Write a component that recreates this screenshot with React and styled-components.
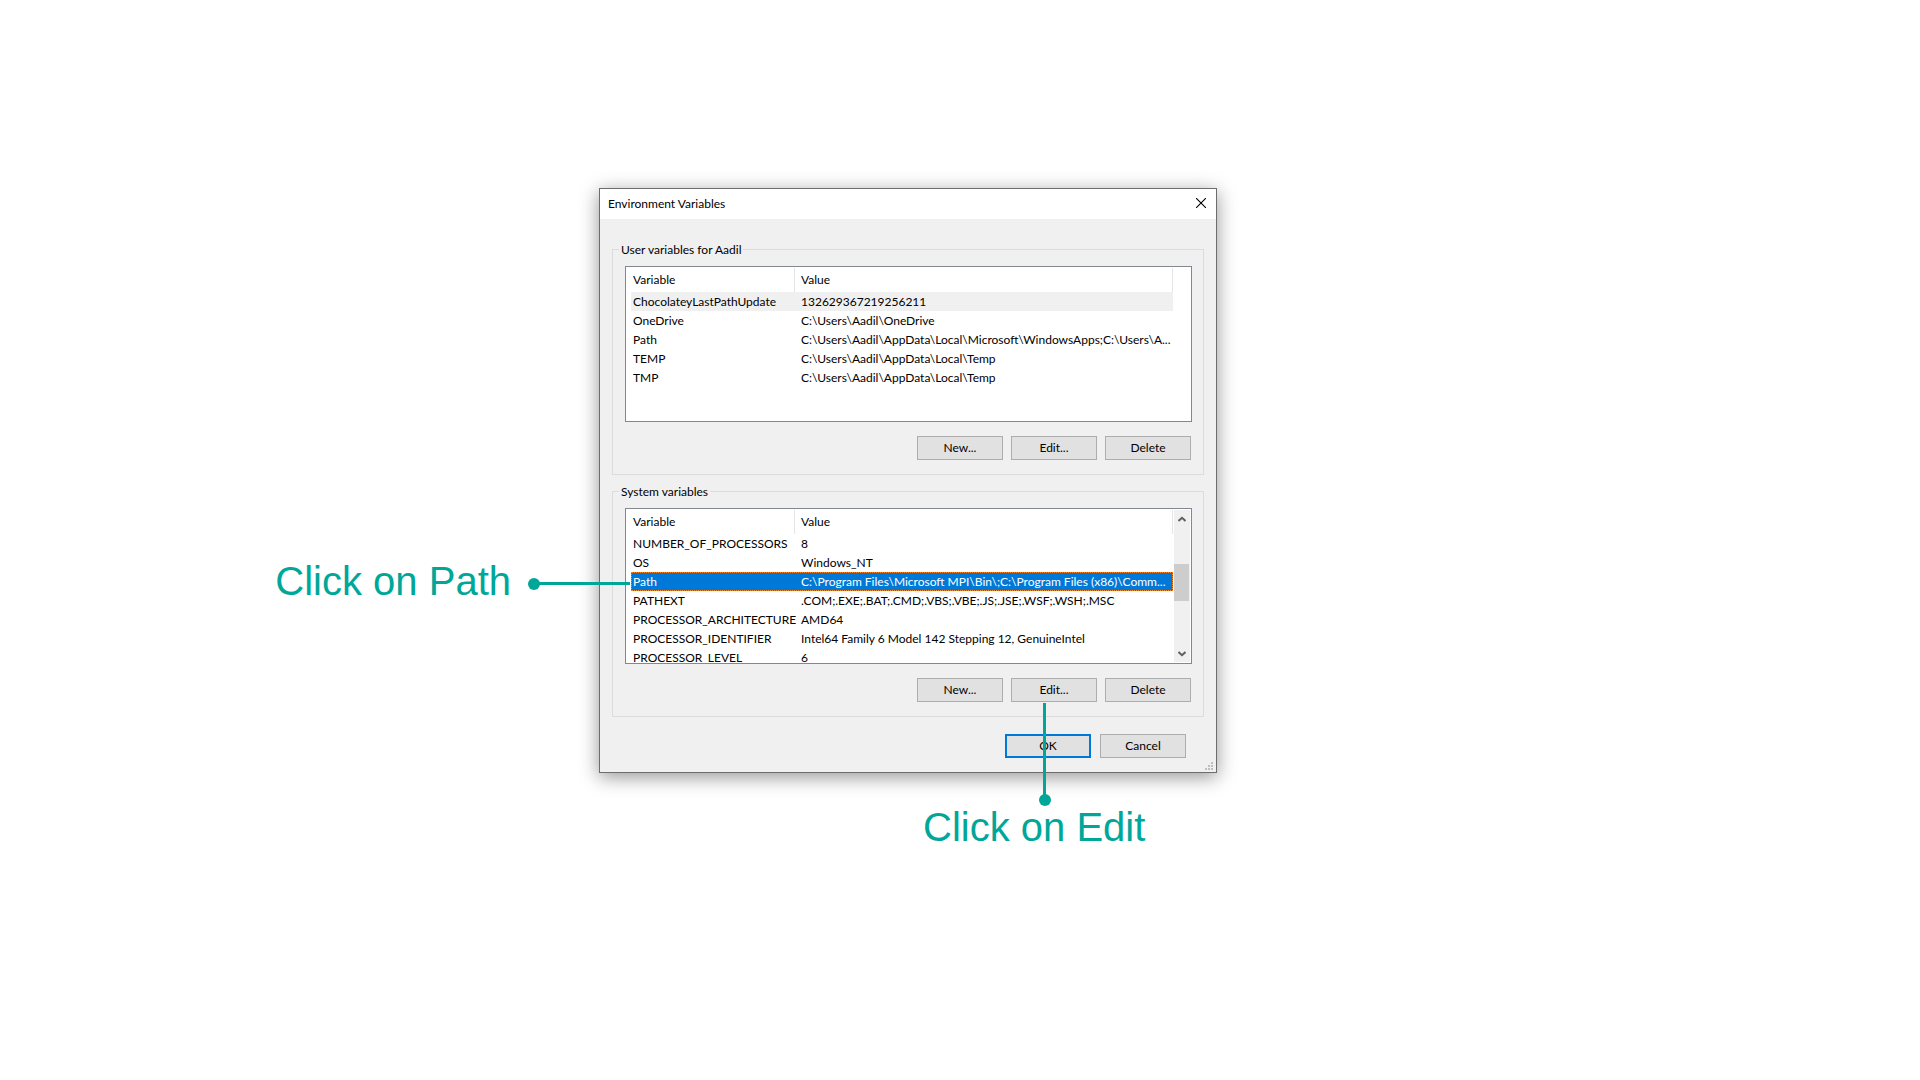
import React from "react";
import styled, { createGlobalStyle, css } from "styled-components";

const GlobalStyle = createGlobalStyle`
  *, *::before, *::after { box-sizing: border-box; }
  body {
    margin: 0;
    background: #ffffff;
    color: #000000;
    font: 12px/19px "Segoe UI", Lato, sans-serif;
  }
`;

const Page = styled.main`
  display: grid;
  grid-template-columns: 599fr 618px 703fr;
  grid-template-rows: 188fr auto 307fr;
  min-height: 100vh;
`;

const Dialog = styled.section`
  grid-area: 2 / 2;
  position: relative;
  background: #f0f0f0;
  border: 1px solid #6d6d6d;
  box-shadow: 0 4px 18px rgba(0, 0, 0, 0.42);
`;

const TitleBar = styled.header`
  display: flex;
  align-items: center;
  justify-content: space-between;
  height: 30px;
  padding: 0 0 2px 8px;
  background: #ffffff;
`;

const Title = styled.h1`
  margin: 0;
  font-size: inherit;
  font-weight: 400;
`;

const CloseButton = styled.button`
  display: grid;
  place-items: center;
  width: 30px;
  height: 28px;
  padding: 0;
  border: 0;
  background: transparent;
`;

const Body = styled.div`
  display: flex;
  flex-direction: column;
  gap: 8px;
  padding: 22px 12px 14px;
`;

const Group = styled.fieldset`
  min-width: 0;
  margin: 0;
  padding: 8px 11px 14px 12px;
  border: 1px solid #dcdcdc;
`;

const Legend = styled.legend`
  margin-left: -6px;
  padding: 0 2px;
  line-height: 17px;
`;

const ListBox = styled.div`
  display: flex;
  justify-content: space-between;
  height: 156px;
  padding: 1px 1px 1px 5px;
  overflow: hidden;
  background: #ffffff;
  border: 1px solid #828790;
`;

const TableClip = styled.div`
  width: 542px;
  overflow: hidden;
`;

const Table = styled.table`
  width: 100%;
  table-layout: fixed;
  border-collapse: separate;
  border-spacing: 0;
`;

const HeadCell = styled.th`
  width: ${(p) => (p.$first ? "164px" : "auto")};
  height: 24px;
  padding: 0 0 2px ${(p) => (p.$first ? "2px" : "6px")};
  border-right: 1px solid #e5e5e5;
  font-weight: 400;
  text-align: left;
`;

const Row = styled.tr`
  ${(p) => p.$tone === "inactive" && css`background: #f0f0f0;`}
  ${(p) =>
    p.$tone === "selected" &&
    css`
      background: #0078d7;
      color: #ffffff;
      outline: 1px dotted #ff8728;
      outline-offset: -1px;
    `}
`;

const Cell = styled.td`
  height: 19px;
  padding: 0 0 0 ${(p) => (p.$first ? "2px" : "6px")};
  white-space: nowrap;
`;

const ScrollBar = styled.div`
  display: flex;
  flex-direction: column;
  width: 16px;
  background: #f0f0f0;
`;

const ScrollArrow = styled.button`
  display: grid;
  place-items: center;
  width: 15px;
  height: 17px;
  padding: 0;
  border: 0;
  background: transparent;
`;

const ScrollTrack = styled.div`
  flex: 1;
  padding-top: 37px;
`;

const ScrollThumb = styled.div`
  width: 15px;
  height: 37px;
  background: #cdcdcd;
`;

const Actions = styled.div`
  display: flex;
  justify-content: flex-end;
  gap: ${(p) => (p.$footer ? "9px" : "8px")};
  margin: ${(p) => (p.$footer ? "9px 18px 0 0" : "14px 1px 0 0")};
`;

const PushButton = styled.button`
  width: 86px;
  height: 24px;
  padding: 0;
  border: ${(p) => (p.$default ? "2px solid #0078d7" : "1px solid #adadad")};
  background: #e1e1e1;
  color: inherit;
  font: inherit;
  line-height: 20px;
`;

const Grip = styled.svg`
  position: absolute;
  right: 3px;
  bottom: 2px;
`;

const Pointer = styled.div`
  position: absolute;
  background: #00a799;
  ${(p) =>
    p.$vertical
      ? css`left: 443px; top: 514px; width: 3px; height: 97px;`
      : css`left: -67px; top: 393px; width: 97px; height: 3px;`}

  &::after {
    content: "";
    position: absolute;
    width: 12px;
    height: 12px;
    border-radius: 50%;
    background: inherit;
    ${(p) => (p.$vertical ? css`left: -4px; bottom: -6px;` : css`left: -5px; top: -4px;`)}
  }
`;

const Callout = styled.p`
  position: absolute;
  margin: 0;
  color: #00a799;
  font: 40px/46px "Liberation Sans", Arial, sans-serif;
  white-space: nowrap;
  ${(p) => (p.$below ? css`left: 323px; top: 615px;` : css`right: 705px; top: 369px;`)}
`;

const userVariables = [
  ["ChocolateyLastPathUpdate", "132629367219256211", "inactive"],
  ["OneDrive", "C:\\Users\\Aadil\\OneDrive"],
  ["Path", "C:\\Users\\Aadil\\AppData\\Local\\Microsoft\\WindowsApps;C:\\Users\\A..."],
  ["TEMP", "C:\\Users\\Aadil\\AppData\\Local\\Temp"],
  ["TMP", "C:\\Users\\Aadil\\AppData\\Local\\Temp"],
];

const systemVariables = [
  ["NUMBER_OF_PROCESSORS", "8"],
  ["OS", "Windows_NT"],
  ["Path", "C:\\Program Files\\Microsoft MPI\\Bin\\;C:\\Program Files (x86)\\Comm...", "selected"],
  ["PATHEXT", ".COM;.EXE;.BAT;.CMD;.VBS;.VBE;.JS;.JSE;.WSF;.WSH;.MSC"],
  ["PROCESSOR_ARCHITECTURE", "AMD64"],
  ["PROCESSOR_IDENTIFIER", "Intel64 Family 6 Model 142 Stepping 12, GenuineIntel"],
  ["PROCESSOR_LEVEL", "6"],
];

function Chevron({ down }) {
  return (
    <svg width="8" height="6" viewBox="0 0 8 6" aria-hidden="true">
      <path
        d={down ? "M0.5 1L4 4.2L7.5 1" : "M0.5 5L4 1.8L7.5 5"}
        fill="none"
        stroke="#606060"
        strokeWidth="2"
      />
    </svg>
  );
}

function VariableGroup({ title, rows, scrollable }) {
  return (
    <Group>
      <Legend>{title}</Legend>
      <ListBox>
        <TableClip>
          <Table aria-label={title}>
            <thead>
              <tr>
                <HeadCell $first scope="col">Variable</HeadCell>
                <HeadCell scope="col">Value</HeadCell>
              </tr>
            </thead>
            <tbody>
              {rows.map(([name, value, tone]) => (
                <Row key={name} $tone={tone}>
                  <Cell $first>{name}</Cell>
                  <Cell>{value}</Cell>
                </Row>
              ))}
            </tbody>
          </Table>
        </TableClip>
        {scrollable && (
          <ScrollBar>
            <ScrollArrow type="button" aria-label="Scroll up"><Chevron /></ScrollArrow>
            <ScrollTrack><ScrollThumb /></ScrollTrack>
            <ScrollArrow type="button" aria-label="Scroll down"><Chevron down /></ScrollArrow>
          </ScrollBar>
        )}
      </ListBox>
      <Actions>
        <PushButton type="button">New...</PushButton>
        <PushButton type="button">Edit...</PushButton>
        <PushButton type="button">Delete</PushButton>
      </Actions>
    </Group>
  );
}

export default function App() {
  return (
    <Page>
      <GlobalStyle />
      <Dialog role="dialog" aria-labelledby="dialog-title">
        <TitleBar>
          <Title id="dialog-title">Environment Variables</Title>
          <CloseButton type="button" aria-label="Close">
            <svg width="10" height="10" viewBox="0 0 10 10" aria-hidden="true">
              <path d="M0 0L10 10M10 0L0 10" stroke="#000" strokeWidth="1.1" />
            </svg>
          </CloseButton>
        </TitleBar>
        <Body>
          <VariableGroup title="User variables for Aadil" rows={userVariables} />
          <VariableGroup title="System variables" rows={systemVariables} scrollable />
          <Actions $footer>
            <PushButton type="button" $default>OK</PushButton>
            <PushButton type="button">Cancel</PushButton>
          </Actions>
        </Body>
        <Grip width="8" height="8" viewBox="0 0 8 8" fill="#bfbfbf" aria-hidden="true">
          <path d="M6 0h2v2h-2zM3 3h2v2h-2zM6 3h2v2h-2zM0 6h2v2h-2zM3 6h2v2h-2zM6 6h2v2h-2z" />
        </Grip>
        <Pointer />
        <Callout>Click on Path</Callout>
        <Pointer $vertical />
        <Callout $below>Click on Edit</Callout>
      </Dialog>
    </Page>
  );
}
